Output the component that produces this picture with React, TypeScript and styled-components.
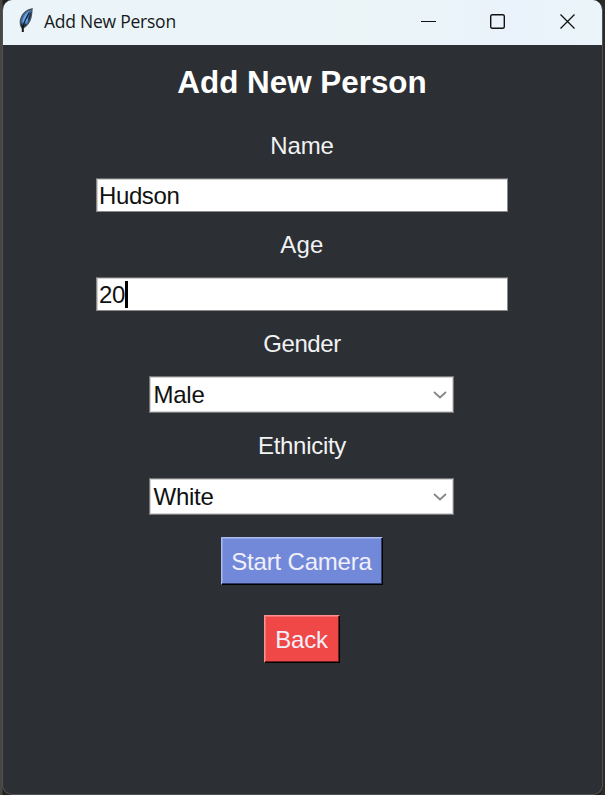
import React from 'react';
import styled, { createGlobalStyle } from 'styled-components';

const GlobalStyle = createGlobalStyle`
  * { box-sizing: border-box; }
  body { margin: 0; background: #30302d; overflow: hidden; }
`;

const Desktop = styled.div`
  width: 605px;
  height: 795px;
  padding: 0 1px 0 2px;
  background: linear-gradient(90deg, #464642 0, #464642 2px, #1f1f1d 3px, #1f1f1d 598px, #2b2b28 603px);
`;

const Window = styled.main`
  width: 601px;
  height: 795px;
  display: flex;
  flex-direction: column;
  overflow: hidden;
  border-radius: 10px;
  border: solid #505154;
  border-width: 0 1px 1px 1px;
  background: #2c2f33;
  font-family: 'Liberation Sans', Arial, sans-serif;
`;

const TitleBar = styled.header`
  height: 45px;
  margin: 0 -1px;
  flex: none;
  display: flex;
  align-items: flex-start;
  background: linear-gradient(90deg, #ebf4f8, #ebf4f7 60%, #eaf3fb 85%, #ebf4f9);
`;

const Feather = styled.svg`
  width: 18px;
  height: 26px;
  margin: 8px 0 0 14px;
`;

const WindowTitle = styled.span`
  margin-left: 10px;
  line-height: 43px;
  font-family: 'Open Sans', 'Noto Sans', sans-serif;
  font-size: 17.5px;
  letter-spacing: -0.24px;
  color: #15191b;
`;

const Controls = styled.div`
  display: flex;
  margin-left: auto;
`;

const ControlButton = styled.button<{ $width: number }>`
  width: ${p => p.$width}px;
  height: 43px;
  padding: 0;
  border: 0;
  background: none;
  display: flex;
  align-items: center;
  justify-content: center;
  svg { display: block; }
`;

const Form = styled.section`
  display: flex;
  flex-direction: column;
  align-items: center;
  padding-right: 1px;
`;

const Heading = styled.h1`
  margin: 19px 0 0;
  height: 38px;
  line-height: 38px;
  font-size: 31.4px;
  white-space: nowrap;
  color: #fff;
`;

const Label = styled.label<{ $gap: number; $tracking?: number }>`
  margin-top: ${p => p.$gap}px;
  height: 30px;
  line-height: 30px;
  font-size: 24px;
  letter-spacing: ${p => p.$tracking ?? 0}px;
  color: #f1f2f3;
`;

const Entry = styled.div`
  width: 412px;
  height: 34px;
  margin-top: 17px;
  padding: 2px 0 0 2px;
  display: flex;
  align-items: center;
  border: 1px solid #8a8a8a;
  border-top-color: #696969;
  background: #fff;
  box-shadow: inset 1px 1px #d0d0d0;
  font-size: 24px;
  letter-spacing: -0.4px;
  color: #111;
`;

const Caret = styled.span`
  width: 3px;
  height: 27px;
  margin: 0 0 2px 0;
  background: #000;
`;

const Combo = styled.div`
  width: 305px;
  height: 37px;
  margin: 17px 2px 0 0;
  padding: 1px 6px 0 4px;
  display: flex;
  align-items: center;
  justify-content: space-between;
  border: 1px solid #777;
  background: #fff;
  box-shadow: inset 0 0 0 1px #d4d4d4;
  font-size: 24px;
  letter-spacing: -0.25px;
  color: #111;
`;

const ActionButton = styled.button<{ $tone: 'blue' | 'red' }>`
  width: ${p => (p.$tone === 'blue' ? 162 : 76)}px;
  height: 48px;
  margin-top: ${p => (p.$tone === 'blue' ? 22 : 30)}px;
  padding: 2px 1px 0 0;
  border: solid;
  border-width: 1px;
  border-color: ${p => (p.$tone === 'blue' ? '#a9b8f0 #000 #000 #a9b8f0' : '#fa9090 #000 #000 #fa9090')};
  background: ${p => (p.$tone === 'blue' ? '#7289da' : '#f04747')};
  box-shadow:
    inset -1px -1px ${p => (p.$tone === 'blue' ? '#303c66' : '#702020')},
    inset 1px 1px ${p => (p.$tone === 'blue' ? '#91a2e5' : '#f56e6e')};
  color: #f0effa;
  font: 24px 'Liberation Sans', Arial, sans-serif;
  letter-spacing: -0.18px;
  white-space: nowrap;
`;

const Chevron = () => (
  <svg width="14" height="8" viewBox="0 0 14 8" fill="none" stroke="#858585" strokeWidth="1.7">
    <path d="M1 1l6 5.5L13 1" />
  </svg>
);

export default function App() {
  return (
    <>
      <GlobalStyle />
      <Desktop>
        <Window>
          <TitleBar>
            <Feather viewBox="0 0 18 26">
              <path d="M16 .9C11.2 1.8 7.4 4.7 5.4 9.3c-1.5 3.5-1.2 7.2.1 10l1.4.8c4.1-2.4 6.9-5.9 8-10.5.7-3 .9-5.8 1.1-8.7Z" fill="#3970ae" stroke="#4b535a" strokeWidth="1.4" />
              <path d="M13.4 4c-3 2-5 5.3-6 10M11.6 10.5l-2.5 4" fill="none" stroke="#6ca5e2" strokeWidth="2.4" />
              <path d="M13.4 4.2C10.8 9 8.4 13 7.2 18M5.2 15.5l1.5 3.8 3.2-3M14.6 4.8c-.3 2.6-.9 5-2.2 7.6" fill="none" stroke="#172334" strokeWidth="1.2" />
              <path d="M6.8 17v7" stroke="#171717" strokeWidth="2" />
            </Feather>
            <WindowTitle>Add New Person</WindowTitle>
            <Controls>
              <ControlButton $width={69} aria-label="Minimize">
                <svg width="15" height="15" viewBox="0 0 15 15"><path d="M0 7.5h15" stroke="#111" /></svg>
              </ControlButton>
              <ControlButton $width={69} aria-label="Maximize">
                <svg width="15" height="15" viewBox="0 0 15 15"><rect x=".7" y=".7" width="13.6" height="13.6" rx="1.5" fill="none" stroke="#111" strokeWidth="1.4" /></svg>
              </ControlButton>
              <ControlButton $width={71} aria-label="Close">
                <svg width="15" height="15" viewBox="0 0 15 15"><path d="M.5.5l14 14m0-14l-14 14" stroke="#111" strokeWidth="1.3" /></svg>
              </ControlButton>
            </Controls>
          </TitleBar>
          <Form>
            <Heading>Add New Person</Heading>
            <Label $gap={29} $tracking={-0.1}>Name</Label>
            <Entry>Hudson</Entry>
            <Label $gap={18} $tracking={0.2}>Age</Label>
            <Entry>20<Caret /></Entry>
            <Label $gap={18} $tracking={-0.4}>Gender</Label>
            <Combo>Male<Chevron /></Combo>
            <Label $gap={18} $tracking={-0.3}>Ethnicity</Label>
            <Combo>White<Chevron /></Combo>
            <ActionButton $tone="blue">Start Camera</ActionButton>
            <ActionButton $tone="red">Back</ActionButton>
          </Form>
        </Window>
      </Desktop>
    </>
  );
}
